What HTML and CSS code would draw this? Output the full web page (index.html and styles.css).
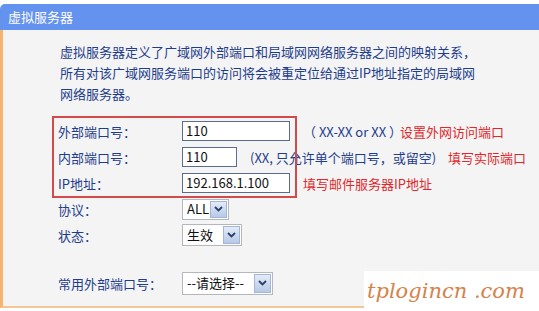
FILE: index.html
```html
<!DOCTYPE html>
<html lang="zh">
<head>
<meta charset="utf-8">
<title>虚拟服务器</title>
<link rel="stylesheet" href="styles.css">
</head>
<body>
<div class="panel">
  <div class="title">虚拟服务器</div>
  <div class="content">
    <p class="intro">虚拟服务器定义了广域网外部端口和局域网网络服务器之间的映射关系，<br>所有对该广域网服务端口的访问将会被重定位给通过IP地址指定的局域网<br>网络服务器。</p>
    <div class="form">
      <div class="highlight"></div>
      <div class="row">
        <span class="label">外部端口号：</span>
        <span class="input wide">110</span>
        <span class="hint h1">（ XX-XX or XX ）</span>
        <span class="tip">设置外网访问端口</span>
      </div>
      <div class="row">
        <span class="label">内部端口号：</span>
        <span class="input narrow">110</span>
        <span class="hint h2">(XX, 只允许单个端口号，或留空)</span>
        <span class="tip">填写实际端口</span>
      </div>
      <div class="row">
        <span class="label">IP地址：</span>
        <span class="input wide">192.168.1.100</span>
        <span class="tip gap">填写邮件服务器IP地址</span>
      </div>
      <div class="row">
        <span class="label">协议：</span>
        <span class="select s-all"><span class="val">ALL</span><span class="arrow"><svg width="9" height="6" viewBox="0 0 9 6"><path d="M1 1 L4.5 4.5 L8 1" fill="none" stroke="#2b3f6c" stroke-width="1.8"/></svg></span></span>
      </div>
      <div class="row">
        <span class="label">状态：</span>
        <span class="select s-state"><span class="val">生效</span><span class="arrow"><svg width="9" height="6" viewBox="0 0 9 6"><path d="M1 1 L4.5 4.5 L8 1" fill="none" stroke="#2b3f6c" stroke-width="1.8"/></svg></span></span>
      </div>
      <div class="row common">
        <span class="label">常用外部端口号：</span>
        <span class="select s-common"><span class="val">--请选择--</span><span class="arrow"><svg width="9" height="6" viewBox="0 0 9 6"><path d="M1 1 L4.5 4.5 L8 1" fill="none" stroke="#2b3f6c" stroke-width="1.8"/></svg></span></span>
      </div>
    </div>
  </div>
  <div class="watermark">tplogincn .com</div>
</div>
</body>
</html>
```
FILE: styles.css
```css
* { box-sizing: border-box; }
html, body {
  margin: 0;
  padding: 0;
  background: #ffffff;
}
body {
  width: 539px;
  height: 311px;
  overflow: hidden;
  font-family: "Noto Sans CJK SC", "Liberation Sans", sans-serif;
  font-size: 13px;
}
.panel {
  position: relative;
  padding-top: 4px;
}
.title {
  height: 26px;
  background: #6492ef;
  color: #ffffff;
  border-top-left-radius: 5px;
  padding-left: 8px;
  line-height: 26px;
  font-size: 13px;
}
.content {
  height: 278px;
  background: #f4f4f4;
  border-left: 3px solid #f6b46e;
  border-bottom: 2px solid #f3c597;
  padding-top: 11px;
}
.intro {
  margin: 0;
  padding-left: 57px;
  line-height: 21px;
  color: #1e3d8c;
  white-space: nowrap;
}
.form {
  position: relative;
  margin-top: 14px;
  padding-left: 55px;
}
.highlight {
  position: absolute;
  left: 49px;
  top: -2px;
  width: 245px;
  height: 82px;
  border: 2px solid #d24a4a;
  pointer-events: none;
}
.row {
  display: flex;
  align-items: center;
  height: 26px;
  white-space: nowrap;
}
.row.common {
  margin-top: 22px;
}
.label {
  width: 124px;
  color: #1e3d8c;
}
.input {
  height: 20px;
  background: #ffffff;
  border: 1px solid #5b6d8f;
  padding-left: 3px;
  line-height: 18px;
  color: #111111;
}
.input.wide { width: 108px; }
.input.narrow { width: 55px; }
.hint {
  margin-left: 13px;
  color: #1e3d8c;
}
.hint.h1 { width: 97px; }
.hint.h2 { width: 198px; }
.tip {
  color: #e0282c;
}
.tip.gap { margin-left: 13px; }
.select {
  display: flex;
  align-items: center;
  height: 21px;
  background: #ffffff;
  border: 1px solid #b4b8be;
  padding: 1px;
}
.select .val {
  flex: 1;
  padding-left: 3px;
  color: #111111;
  line-height: 18px;
}
.select .arrow {
  width: 17px;
  height: 100%;
  display: flex;
  align-items: center;
  justify-content: center;
  background: linear-gradient(#e3ebf8, #b7c9e6);
  border: 1px solid #a3b6d6;
}
.s-all { width: 47px; }
.s-state { width: 60px; height: 22px; }
.s-common { width: 91px; height: 23px; }
.watermark {
  position: absolute;
  left: 364px;
  top: 271px;
  width: 175px;
  height: 40px;
  background: #ffffff;
  color: #d6824a;
  font-family: "DejaVu Serif", serif;
  font-style: italic;
  font-size: 21px;
  line-height: 40px;
  padding-left: 3px;
  white-space: nowrap;
}
```
